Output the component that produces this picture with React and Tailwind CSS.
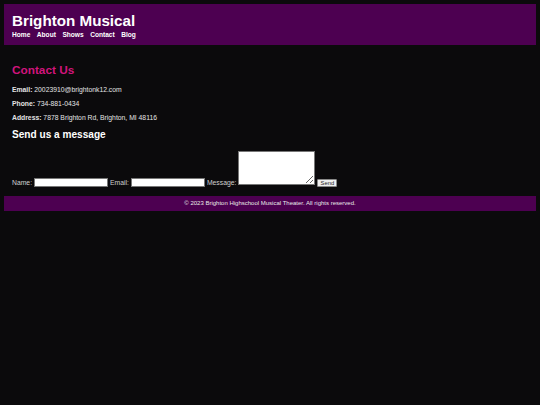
export default function App() {
  return (
    <div className="min-h-[405px] bg-[#0b0a0c] p-[4px] font-['Liberation_Sans',Arial,sans-serif] text-[#e4e4e4]">
      <header className="h-[41px] bg-[#4d0051] px-[8px] pt-[8px]">
        <h1 className="text-[15.2px] font-bold leading-[18px] text-white">Brighton Musical</h1>
        <nav className="mt-[1px] flex gap-[6.5px] text-[6.6px] font-bold leading-[8px] text-white">
          <a>Home</a>
          <a>About</a>
          <a>Shows</a>
          <a>Contact</a>
          <a>Blog</a>
        </nav>
      </header>

      <main className="px-[8px]">
        <h2 className="mt-[18px] text-[11.8px] font-bold leading-[14px] text-[#d1147c]">Contact Us</h2>
        <p className="mt-[9px] text-[6.8px] leading-[8px]">
          <strong>Email:</strong> 20023910@brightonk12.com
        </p>
        <p className="mt-[6px] text-[6.8px] leading-[8px]">
          <strong>Phone:</strong> 734-881-0434
        </p>
        <p className="mt-[6px] text-[6.8px] leading-[8px]">
          <strong>Address:</strong> 7878 Brighton Rd, Brighton, MI 48116
        </p>
        <h3 className="mt-[7px] text-[10.1px] font-bold leading-[12px] text-white">Send us a message</h3>

        <form className="mt-[10px] flex items-end text-[6.8px] leading-[9px] text-[#d0d0d0]">
          <label className="mr-[2px]">Name:</label>
          <input className="h-[9px] w-[74px] border border-[#777] bg-white" />
          <label className="mx-[2px]">Email:</label>
          <input className="h-[9px] w-[74px] border border-[#777] bg-white" />
          <label className="mx-[2px]">Message:</label>
          <textarea className="mb-[2px] h-[34px] w-[77px] resize border border-[#777] bg-white" />
          <button type="button" className="mb-[0.5px] ml-[2px] h-[8px] w-[20px] rounded-[1px] border border-[#888] bg-[#efefef] text-[5.8px] leading-[6px] text-[#222]">
            Send
          </button>
        </form>
      </main>

      <footer className="mt-[9px] flex h-[15px] items-center justify-center bg-[#4d0051] text-[6px] text-[#e8e8e8]">
        © 2023 Brighton Highschool Musical Theater. All rights reserved.
      </footer>
    </div>
  );
}
